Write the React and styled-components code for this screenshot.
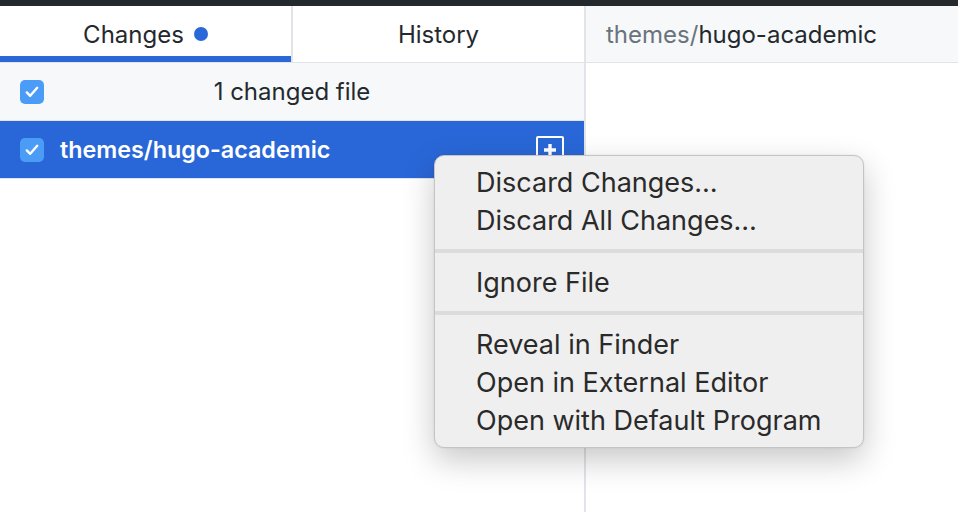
import React from "react";
import styled, { createGlobalStyle } from "styled-components";

const GlobalStyle = createGlobalStyle`
  html, body {
    margin: 0;
    padding: 0;
    background: #fff;
  }
  body {
    font-family: Inter, "Noto Sans", sans-serif;
    -webkit-font-smoothing: antialiased;
  }
`;

const Window = styled.div`
  position: relative;
  width: 958px;
  height: 512px;
  overflow: hidden;
  display: flex;
  flex-direction: column;
  background: #fff;
`;

const TitleStrip = styled.div`
  height: 6px;
  background: #24292e;
  flex-shrink: 0;
`;

const Main = styled.div`
  flex: 1;
  display: flex;
`;

const Sidebar = styled.div`
  width: 584px;
  border-right: 2px solid #e1e4e8;
  display: flex;
  flex-direction: column;
`;

const Tabs = styled.div`
  display: flex;
  height: 56px;
  border-bottom: 1px solid #e1e4e8;
`;

const Tab = styled.div`
  flex: 1;
  display: flex;
  align-items: center;
  justify-content: center;
  gap: 10px;
  font-size: 24px;
  color: #24292e;
  background: #fff;
  box-shadow: ${(p) => (p.$active ? "inset 0 -6px 0 #2a68d8" : "none")};
  & + & {
    border-left: 2px solid #e1e4e8;
  }
`;

const Dot = styled.span`
  width: 14px;
  height: 14px;
  border-radius: 50%;
  background: #2a68d8;
`;

const Row = styled.div`
  height: 57px;
  display: flex;
  align-items: center;
  padding: 0 20px;
  gap: 16px;
  font-size: 24px;
  background: ${(p) => (p.$selected ? "#2967d8" : "#f6f8fa")};
  color: ${(p) => (p.$selected ? "#fff" : "#24292e")};
  border-bottom: 1px solid #e1e4e8;
`;

const Check = styled.span`
  width: 24px;
  height: 24px;
  border-radius: 5px;
  background: #4a9cf7;
  display: flex;
  align-items: center;
  justify-content: center;
  flex-shrink: 0;
`;

const RowLabel = styled.span`
  flex: 1;
  text-align: ${(p) => (p.$center ? "center" : "left")};
  font-weight: ${(p) => (p.$bold ? 600 : 400)};
  font-size: ${(p) => (p.$bold ? "23.3px" : "24px")};
  padding-right: ${(p) => (p.$center ? "40px" : "0")};
`;

const AddedIcon = styled.span`
  width: 24px;
  height: 24px;
  border: 2px solid #fff;
  border-radius: 2px;
  display: flex;
  align-items: center;
  justify-content: center;
`;

const Content = styled.div`
  flex: 1;
  display: flex;
  flex-direction: column;
`;

const PathHeader = styled.div`
  height: 56px;
  background: #f6f8fa;
  border-bottom: 1px solid #e1e4e8;
  display: flex;
  align-items: center;
  padding-left: 20px;
  font-size: 24px;
  color: #24292e;
`;

const Dim = styled.span`
  color: #6a737d;
`;

const Menu = styled.div`
  position: absolute;
  left: 434px;
  top: 155px;
  width: 430px;
  box-sizing: border-box;
  padding: 7px 0 8px;
  background: #efefef;
  border: 1px solid #c4c4c4;
  border-radius: 10px;
  box-shadow: 0 12px 32px rgba(0, 0, 0, 0.22), 0 0 2px rgba(0, 0, 0, 0.1);
`;

const MenuItem = styled.div`
  height: 38px;
  display: flex;
  align-items: center;
  padding-left: 41px;
  font-size: 27px;
  color: #2a2a2a;
`;

const Separator = styled.div`
  height: 4px;
  margin: 10px 0;
  background: #dcdcdc;
`;

const CheckMark = () => (
  <svg width="14" height="12" viewBox="0 0 14 12">
    <path
      d="M1.8 6.4 L5.2 9.8 L12.2 1.8"
      fill="none"
      stroke="#fff"
      strokeWidth="2.4"
      strokeLinecap="round"
      strokeLinejoin="round"
    />
  </svg>
);

const Plus = () => (
  <svg width="16" height="16" viewBox="0 0 16 16">
    <path d="M8 2 V14 M2 8 H14" stroke="#fff" strokeWidth="3.4" />
  </svg>
);

const menu = [
  ["Discard Changes…", "Discard All Changes…"],
  ["Ignore File"],
  ["Reveal in Finder", "Open in External Editor", "Open with Default Program"],
];

export default function App() {
  return (
    <Window>
      <GlobalStyle />
      <TitleStrip />
      <Main>
        <Sidebar>
          <Tabs>
            <Tab $active>
              Changes <Dot />
            </Tab>
            <Tab>History</Tab>
          </Tabs>
          <Row>
            <Check>
              <CheckMark />
            </Check>
            <RowLabel $center>1 changed file</RowLabel>
          </Row>
          <Row $selected>
            <Check>
              <CheckMark />
            </Check>
            <RowLabel $bold>themes/hugo-academic</RowLabel>
            <AddedIcon>
              <Plus />
            </AddedIcon>
          </Row>
        </Sidebar>
        <Content>
          <PathHeader>
            <Dim>themes/</Dim>hugo-academic
          </PathHeader>
        </Content>
      </Main>
      <Menu>
        {menu.map((group, i) => (
          <React.Fragment key={i}>
            {i > 0 && <Separator />}
            {group.map((label) => (
              <MenuItem key={label}>{label}</MenuItem>
            ))}
          </React.Fragment>
        ))}
      </Menu>
    </Window>
  );
}
